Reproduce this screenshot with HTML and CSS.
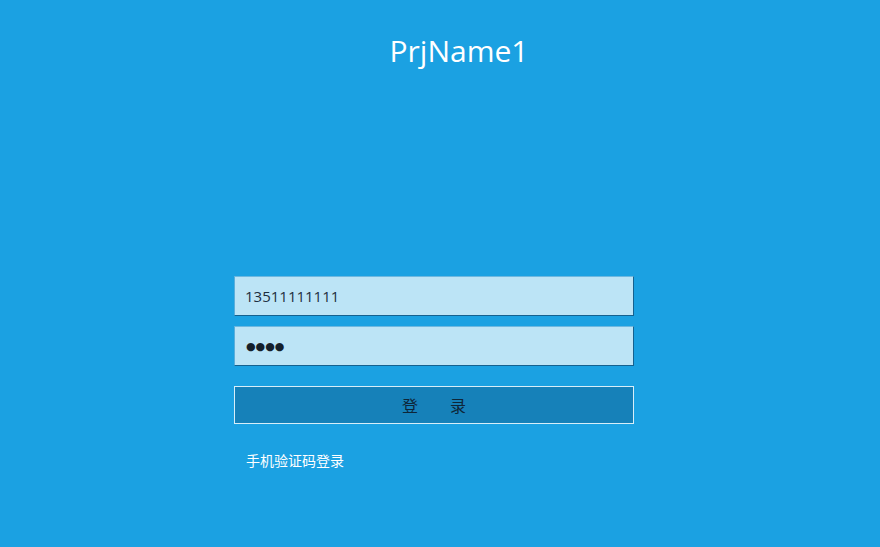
FILE: index.html
```html
<!DOCTYPE html>
<html>
<head>
<meta charset="utf-8">
<link rel="stylesheet" href="styles.css">
</head>
<body>
<div class="page">
  <h1 class="title">PrjName1</h1>
  <form class="login">
    <div class="field"><span class="value">13511111111</span></div>
    <div class="field"><span class="dots">●●●●</span></div>
    <div class="btn"><span>登</span><span>录</span></div>
    <a class="link">手机验证码登录</a>
  </form>
</div>
</body>
</html>
```
FILE: styles.css
```css
html, body {
  margin: 0;
  padding: 0;
}
body {
  background: #1ba1e2;
  width: 880px;
  height: 547px;
  overflow: hidden;
  font-family: "Open Sans", "Noto Sans CJK SC", sans-serif;
}
.page {
  display: flex;
  flex-direction: column;
}
.title {
  margin: 32px 0 0 0;
  padding-left: 38px;
  text-align: center;
  font-size: 30px;
  line-height: 38px;
  font-weight: 400;
  color: #ffffff;
}
.login {
  margin: 206px 0 0 234px;
  width: 400px;
  display: flex;
  flex-direction: column;
}
.field {
  box-sizing: border-box;
  height: 40px;
  background: #bce4f6;
  border: 1px solid #2a7fb0;
  border-top-color: #6db8e0;
  border-left-color: #5aaedb;
  border-bottom-color: #15618f;
  border-right-color: #15618f;
  display: flex;
  align-items: center;
  padding-left: 10px;
  margin-bottom: 10px;
}
.value {
  font-size: 15px;
  color: #1c2f3f;
}
.dots {
  font-family: "DejaVu Sans", sans-serif;
  font-size: 11px;
  letter-spacing: 0px;
  color: #15202b;
  padding-left: 1px;
}
.btn {
  box-sizing: border-box;
  margin-top: 10px;
  height: 38px;
  background: #1681b9;
  border: 1px solid #d8eef9;
  display: flex;
  justify-content: center;
  align-items: center;
  gap: 32px;
  font-family: "Noto Sans CJK SC", sans-serif;
  font-size: 16px;
  color: #0e2638;
}
.link {
  margin: 26px 0 0 12px;
  font-family: "Noto Sans CJK SC", sans-serif;
  font-size: 14px;
  line-height: 20px;
  color: #ffffff;
}
```
